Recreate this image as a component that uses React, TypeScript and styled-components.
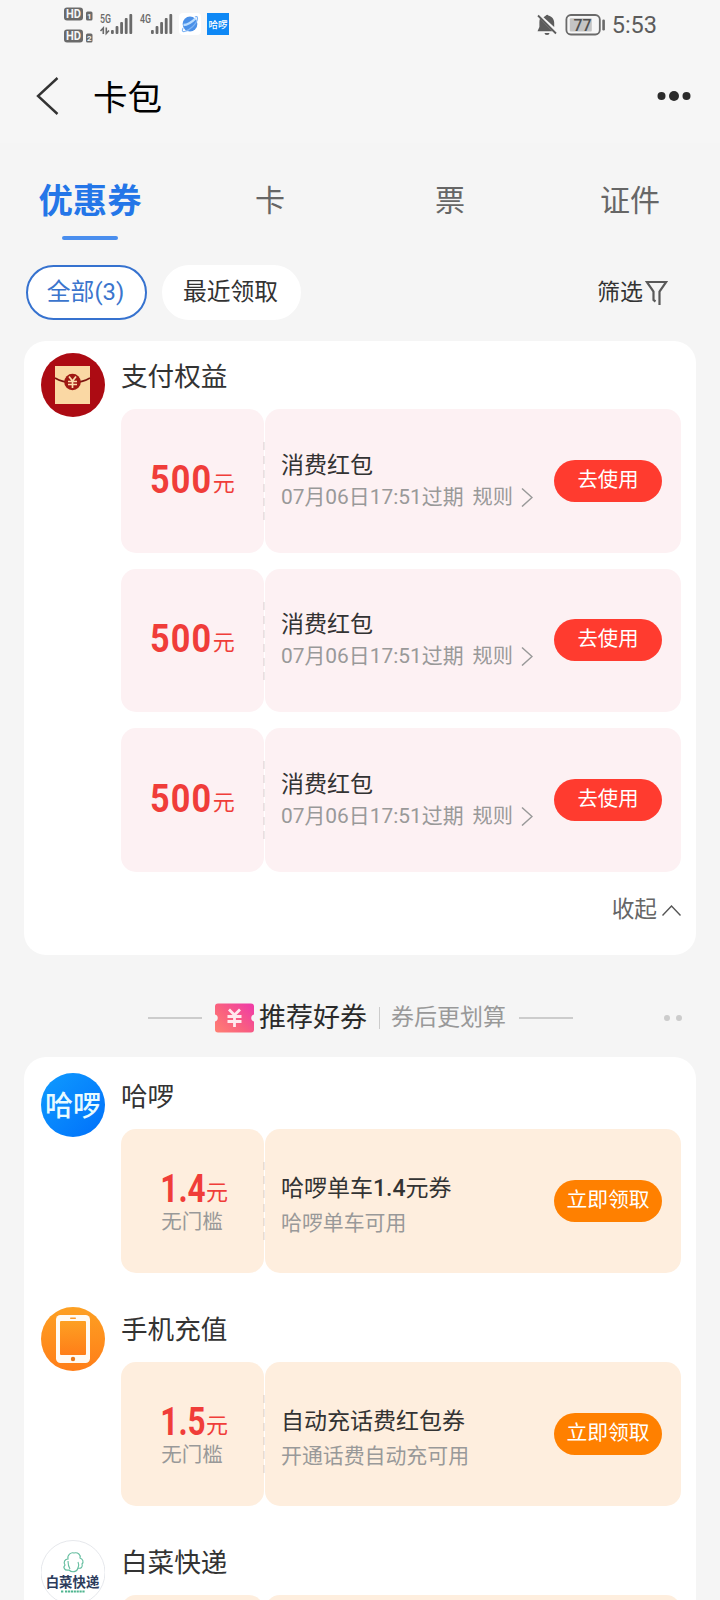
import React from "react";
import styled, { createGlobalStyle } from "styled-components";

const GlobalStyle = createGlobalStyle`
  *, *::before, *::after { box-sizing: border-box; }
  html, body { margin: 0; padding: 0; background: #f5f5f5; }
  body { font-family: Roboto, "Noto Sans CJK SC", sans-serif; font-weight: 400; color: #333; }
  button { font-family: inherit; font-weight: inherit; border: 0; padding: 0; background: none; color: inherit; }
`;

const Screen = styled.div`
  width: 720px;
  height: 1600px;
  overflow: hidden;
  display: flex;
  flex-direction: column;
  background: #f5f5f5;
`;

const StatusBar = styled.div`
  height: 48px;
  flex: none;
  display: flex;
  justify-content: space-between;
  background: #f6f6f6;
`;

const StatusRight = styled.div`
  display: flex;
  align-items: center;
  gap: 7px;
  padding-right: 63px;
  height: 49px;
`;

const Clock = styled.span`
  font-size: 23.5px;
  line-height: 28px;
  color: #5c5c5c;
`;

const NavBar = styled.header`
  height: 95px;
  flex: none;
  display: flex;
  align-items: center;
  padding: 0 29px 0 36px;
  background: #f6f6f6;
`;

const NavTitle = styled.h1`
  margin: 5px auto 0 34px;
  font-size: 34.6px;
  line-height: 44px;
  font-weight: 400;
  color: #000;
`;

const Tabs = styled.nav`
  flex: none;
  height: 104px;
  display: flex;
  padding-top: 33px;
`;

const Tab = styled.button<{ $active?: boolean }>`
  width: 180px;
  height: 64px;
  display: flex;
  flex-direction: column;
  align-items: center;
  font-size: ${(p) => (p.$active ? "34.4px" : "30px")};
  font-weight: ${(p) => (p.$active ? 700 : 400)};
  line-height: 50px;
  color: ${(p) => (p.$active ? "#2476e8" : "#666")};

  &::after {
    content: "";
    width: 56px;
    height: 4px;
    margin-top: 10px;
    border-radius: 2px;
    background: ${(p) => (p.$active ? "#4a8eee" : "transparent")};
  }
`;

const Filters = styled.div`
  flex: none;
  height: 94px;
  display: flex;
  align-items: center;
  gap: 15px;
  padding: 0 52px 3px 26px;
`;

const Chip = styled.button<{ $active?: boolean }>`
  height: 55px;
  width: ${(p) => (p.$active ? "121px" : "139px")};
  border-radius: 28px;
  background: #fff;
  border: 2px solid ${(p) => (p.$active ? "#3672cf" : "#fff")};
  color: ${(p) => (p.$active ? "#3b75cd" : "#333")};
  font-size: 23.8px;
  line-height: 48px;
  padding: 0 2px 2px 0;
`;

const FilterButton = styled.button`
  margin-left: auto;
  display: flex;
  align-items: center;
  gap: 2px;
  font-size: 23px;
  line-height: 50px;
  color: #333;
`;

const Card = styled.section<{ $h: number; $top: number }>`
  flex: none;
  height: ${(p) => p.$h}px;
  margin: 0 24px;
  padding: ${(p) => p.$top}px 15px 0 17px;
  border-radius: 22px;
  background: #fff;
`;

const Merchant = styled.div<{ $gap: number }>`
  display: flex;
  gap: 16px;
  margin-bottom: ${(p) => p.$gap}px;
`;

const Avatar = styled.svg<{ $drop?: number }>`
  width: 64px;
  height: 64px;
  flex: none;
  margin-top: ${(p) => p.$drop ?? 0}px;
`;

const MerchantBody = styled.div`
  flex: 1;
  min-width: 0;
`;

const MerchantName = styled.h2`
  margin: 0;
  font-size: 26.6px;
  font-weight: 400;
  line-height: 48px;
  height: 56px;
  color: #333;
`;

const CouponList = styled.div`
  display: flex;
  flex-direction: column;
  gap: 16px;
`;

const CouponRow = styled.div<{ $tone: Tone }>`
  position: relative;
  display: flex;
  gap: 1px;
  height: 143.5px;
  --tint: ${(p) => (p.$tone === "red" ? "#fdf1f3" : "#feeede")};
`;

const Perforation = styled.div`
  position: absolute;
  left: 142px;
  top: 33px;
  width: 2px;
  height: 78px;
  background: repeating-linear-gradient(to bottom, rgba(120, 100, 100, 0.14) 0 8px, transparent 8px 14px);
`;

const AmountBox = styled.div`
  width: 143px;
  border-radius: 15px;
  background: var(--tint);
  display: flex;
  flex-direction: column;
  align-items: center;
  justify-content: center;
`;

const Amount = styled.div<{ $alone: boolean }>`
  display: flex;
  align-items: baseline;
  color: #f03d39;
  line-height: 40px;
  padding-top: ${(p) => (p.$alone ? 7 : 5)}px;
`;

const Digits = styled.span<{ $decimal: boolean }>`
  display: inline-block;
  font-size: 38px;
  font-weight: 700;
  letter-spacing: ${(p) => (p.$decimal ? "0" : "1.3px")};
  margin-left: ${(p) => (p.$decimal ? "-6px" : "-7px")};
  margin-right: ${(p) => (p.$decimal ? "0.5px" : "0")};
  transform: scaleX(${(p) => (p.$decimal ? 0.83 : 0.9)});
  transform-origin: right center;
`;

const Unit = styled.span`
  font-size: 22px;
  margin-bottom: 3px;
  transform: translateY(-2.5px);
`;

const Condition = styled.div`
  margin-top: -9px;
  font-size: 20.5px;
  line-height: 26px;
  color: #999;
  padding: 0 1px 2px 0;
`;

const DetailBox = styled.div`
  flex: 1;
  border-radius: 15px;
  background: var(--tint);
  display: flex;
  align-items: center;
  justify-content: space-between;
  padding: 0 19px 0 16px;
`;

const CouponText = styled.div<{ $shift: number }>`
  padding-top: ${(p) => p.$shift}px;
`;

const CouponName = styled.div`
  font-size: 23px;
  line-height: 32px;
  color: #333;
  white-space: nowrap;
`;

const Figure = styled.span`
  font-weight: 500;
`;

const CouponNote = styled.div<{ $gap: number }>`
  margin-top: ${(p) => p.$gap}px;
  display: flex;
  align-items: center;
  font-size: 20.9px;
  line-height: 30px;
  color: #999;
  white-space: nowrap;
`;

const Rules = styled.span`
  display: flex;
  align-items: center;
  gap: 8px;
  margin-left: 9px;
  font-size: 20.2px;
`;

const Action = styled.button<{ $tone: Tone }>`
  width: 108px;
  height: 42px;
  border-radius: 21px;
  background: ${(p) => (p.$tone === "red" ? "#ff3b2f" : "#ff8000")};
  color: #fff;
  font-size: ${(p) => (p.$tone === "red" ? "20.3px" : "20.8px")};
  line-height: 40px;
  padding-bottom: 2px;
`;

const Collapse = styled.button`
  margin: 20px 0 0 auto;
  display: flex;
  align-items: center;
  gap: 5px;
  font-size: 22.7px;
  line-height: 35px;
  color: #666;
`;

const SectionHead = styled.div`
  flex: none;
  height: 102px;
  display: flex;
  align-items: center;
  padding: 23px 38px 0 148px;
`;

const Rule = styled.i`
  width: 54px;
  height: 2px;
  background: #ccc;
`;

const SectionTitle = styled.h2`
  margin: 0 0 0 5px;
  font-size: 27px;
  line-height: 40px;
  font-weight: 400;
  color: #2a2a2a;
`;

const Divider = styled.i`
  width: 1px;
  height: 22px;
  margin: 0 11px 0 12px;
  background: #ccc;
`;

const SectionSub = styled.span`
  font-size: 23px;
  line-height: 40px;
  margin-right: 13px;
  color: #999;
`;

const Dots = styled.div`
  margin: 1px 0 0 auto;
  display: flex;
  gap: 6px;
`;

const Dot = styled.i`
  width: 6px;
  height: 6px;
  border-radius: 3px;
  background: #ccc;
`;

type Tone = "red" | "orange";

const StatusLeft = () => (
  <svg width="240" height="48" viewBox="0 0 240 48" fontFamily="Roboto, sans-serif" fill="#6a6a6a">
    {[14, 36].map((y, i) => (
      <g key={y}>
        <rect x="64" y={y - 6.5} width="19" height="13" rx="3" />
        <text x="73.5" y={y + 4.4} fill="#f6f6f6" fontSize="12" fontWeight="700" textAnchor="middle" textLength="15" lengthAdjust="spacingAndGlyphs">HD</text>
        <rect x="86" y={y - 2.5} width="6.5" height="9" rx="1.5" />
        <text x="89.2" y={y + 4.9} fill="#f6f6f6" fontSize="8" fontWeight="700" textAnchor="middle">{i + 1}</text>
      </g>
    ))}
    <text x="100" y="22.8" fontSize="13" fontWeight="500" textLength="11" lengthAdjust="spacingAndGlyphs">5G</text>
    <path d="M103.300 34V28L100.500 31M106.300 27.500V33.500L109 30.500" stroke="#6a6a6a" strokeWidth="1.600" fill="none" />
    {[111, 151].map((x) =>
      [4, 8, 12, 16, 20].map((h, i) => (
        <rect key={`${x}-${h}`} x={x + i * 4.6} y={34 - h} width="2.8" height={h} rx="1" />
      ))
    )}
    <text x="140" y="22.8" fontSize="13" fontWeight="500" textLength="11" lengthAdjust="spacingAndGlyphs">4G</text>
    <rect x="179" y="13" width="22" height="22" rx="4" fill="#fff" />
    <circle cx="190" cy="24" r="7.4" fill="#4a90e8" />
    <path d="M183.500 25C188 25 193 21 195.500 18.500" stroke="#b9dcff" strokeWidth="2.400" fill="none" />
    <path d="M183 28c-1 2.500-1 4 1.500 3.500C189 30.500 197 24 197.500 18.500c0-2-1-2.500-2.500-1.500" stroke="#7fb4f4" strokeWidth="1.200" fill="none" />
    <rect x="207" y="13" width="22" height="22" fill="#0e88f5" />
    <text x="218" y="27.800" fill="#fff" fontFamily='"Noto Sans CJK SC", sans-serif' fontSize="9.500" fontWeight="500" textAnchor="middle">哈啰</text>
  </svg>
);

const MutedBell = () => (
  <svg width="20" height="22" viewBox="0 0 20 22">
    <path d="M3 4.500C2 7 2.600 10 2.400 13L.5 17.300H15.500zM6.500 3.300C7.500 2.500 8.500 2.200 8.800 1.500c1-1.200 2.300-1 2.500 0C15.500 2.500 17.500 6 17.200 9.500V13z" fill="#5c5c5c" />
    <path d="M1 1.500 19 19.500" stroke="#5c5c5c" strokeWidth="1.800" />
    <path d="M7.500 19h5a2.500 2 0 0 1-5 0z" fill="#5c5c5c" />
  </svg>
);

const Battery = () => (
  <svg width="41" height="22" viewBox="0 0 41 22">
    <rect x="2.400" y="1" width="33.400" height="19.500" rx="4.500" fill="none" stroke="#6a6a6a" strokeWidth="1.800" />
    <rect x="5.800" y="4.200" width="22" height="13.300" rx="1" fill="#c4c4c4" />
    <text x="18.500" y="16.800" textAnchor="middle" fontFamily="Roboto, sans-serif" fontSize="17" fontWeight="500" fill="#4f4f4f" textLength="18" lengthAdjust="spacingAndGlyphs">77</text>
    <rect x="38.300" y="5.500" width="2.600" height="11" rx="1.200" fill="#6a6a6a" />
  </svg>
);

const BackIcon = () => (
  <svg width="23" height="38" viewBox="0 0 23 38" fill="none" stroke="#333" strokeWidth="2.400">
    <path d="M21.500 1 2 19 21.500 37" />
  </svg>
);

const MoreIcon = () => (
  <svg width="34" height="12" viewBox="0 0 34 12" fill="#2b2b2b">
    <circle cx="4.500" cy="6" r="4" />
    <circle cx="17" cy="6" r="5" />
    <circle cx="29.500" cy="6" r="4" />
  </svg>
);

const FunnelIcon = () => (
  <svg width="23" height="26" viewBox="0 0 23 26" fill="none" stroke="#5a5a5a" strokeWidth="2.200">
    <path d="M10.500 21.500 8.500 20V11.500L1.800 2H21.200L14.500 11.500V25" />
  </svg>
);

const ChevronRight = () => (
  <svg width="12" height="20" viewBox="0 0 12 20" fill="none" stroke="#999" strokeWidth="1.500">
    <path d="M1 1.500 11 10.500 1 19.500" />
  </svg>
);

const ChevronUpSvg = styled.svg`
  margin-top: 2px;
`;

const ChevronUp = () => (
  <ChevronUpSvg width="19" height="11" viewBox="0 0 19 11" fill="none" stroke="#555" strokeWidth="1.400">
    <path d="M.5 10.500 9.500 1 18.500 10.500" />
  </ChevronUpSvg>
);

const TicketSvg = styled.svg`
  margin-left: 13px;
`;

const TicketIcon = () => (
  <TicketSvg width="39" height="30" viewBox="0 0 39 30">
    <defs>
      <linearGradient id="ticket" x1="0" y1="1" x2="1" y2="0.200">
        <stop offset="0" stopColor="#ff8173" />
        <stop offset="0.500" stopColor="#f9607f" />
        <stop offset="1" stopColor="#f03ea4" />
      </linearGradient>
    </defs>
    <path d="M3 .5H36a3 3 0 0 1 3 3V11.500a3.600 3.600 0 0 0 0 7V26.500a3 3 0 0 1-3 3H3a3 3 0 0 1-3-3V18.500a3.600 3.600 0 0 0 0-7V3.500a3 3 0 0 1 3-3z" fill="url(#ticket)" />
    <path d="M14 6.500 19.500 12 25 6.500M12.500 13.500H26.500M12.500 18.500H26.500M19.500 12V24" stroke="#ffe9ee" strokeWidth="2.800" fill="none" />
  </TicketSvg>
);

const RedPacketAvatar = () => (
  <Avatar viewBox="0 0 64 64">
    <circle cx="32" cy="32" r="32" fill="#ac0b13" />
    <path d="M14 13H49V51H14z" fill="#fad8a4" />
    <path d="M14 25C24 31 39 31 49 25" stroke="#7d1410" strokeWidth="1.800" fill="none" />
    <circle cx="31.500" cy="29" r="8.300" fill="#a01812" />
    <path d="M28 23.500 31.500 28 35 23.500M27 28.500H36M27 31.500H36M31.500 28V35" stroke="#fbdcab" strokeWidth="1.700" fill="none" />
  </Avatar>
);

const HelloAvatar = () => (
  <Avatar viewBox="0 0 64 64">
    <defs>
      <linearGradient id="hello" x1="0" y1="0" x2="1" y2="1">
        <stop offset="0" stopColor="#0f9bff" />
        <stop offset="1" stopColor="#0070fa" />
      </linearGradient>
    </defs>
    <circle cx="32" cy="32" r="32" fill="url(#hello)" />
    <text x="32" y="42.500" textAnchor="middle" fill="#e8fbff" fontFamily='"Noto Sans CJK SC", sans-serif' fontSize="28" fontWeight="500">哈啰</text>
  </Avatar>
);

const PhoneAvatar = () => (
  <Avatar viewBox="0 0 64 64" $drop={1}>
    <defs>
      <linearGradient id="phone" x1="0" y1="0" x2="0" y2="1">
        <stop offset="0" stopColor="#fda023" />
        <stop offset="1" stopColor="#ff7e18" />
      </linearGradient>
    </defs>
    <circle cx="32" cy="32" r="32" fill="url(#phone)" />
    <rect x="15" y="8" width="34" height="48" rx="4.500" fill="#fffaf3" />
    <rect x="19" y="14" width="26" height="34" rx="1" fill="url(#phone)" />
    <rect x="29" y="10.500" width="6" height="1.500" rx=".7" fill="#fd9a2a" />
    <circle cx="32" cy="52" r="2.200" fill="#e8791c" />
  </Avatar>
);

const CabbageAvatar = () => (
  <Avatar viewBox="0 0 64 64" $drop={1}>
    <circle cx="32" cy="32.500" r="32" fill="#fff" stroke="#e6e8ec" />
    <path d="M28 32c-5 1-6-3-4-5-2-3 0-6 3-6-1-4 3-7 6-6 4-1 7 2 6 5 3 1 4 4 2 6 1 3-1 5-4 4-1 4-6 5-9 2zM29 31c-2-3-2-5-2-8M37 30c1-2 1-4 0-6" transform="translate(0 -2)" stroke="#64bd9f" strokeWidth="1.100" fill="none" />
    <text x="31.500" y="46.800" textAnchor="middle" fill="#2d3c5c" fontFamily='"Noto Sans CJK SC", sans-serif' fontSize="13.400" fontWeight="700">白菜快递</text>
    <path d="M20 51.500H23M24 51.500H44" stroke="#4fb58f" strokeWidth="1.800" strokeDasharray="2.200 .7" />
  </Avatar>
);

interface CouponProps {
  tone: Tone;
  amount: string;
  condition?: string;
  name: string;
  note: string;
  rules?: boolean;
  action: string;
}

const Coupon = ({ tone, amount, condition, name, note, rules, action }: CouponProps) => (
  <CouponRow $tone={tone}>
    <AmountBox>
      <Amount $alone={!condition}>
        <Digits $decimal={amount.includes(".")}>{amount}</Digits>
        <Unit>元</Unit>
      </Amount>
      {condition && <Condition>{condition}</Condition>}
    </AmountBox>
    <DetailBox>
      <CouponText $shift={rules ? 0 : 9}>
        <CouponName>
          {name.split(/([\d.]+)/).map((part, i) => (i % 2 ? <Figure key={i}>{part}</Figure> : part))}
        </CouponName>
        <CouponNote $gap={rules ? 0 : 3}>
          {note}
          {rules && (
            <Rules>
              规则
              <ChevronRight />
            </Rules>
          )}
        </CouponNote>
      </CouponText>
      <Action $tone={tone}>{action}</Action>
    </DetailBox>
    <Perforation />
  </CouponRow>
);

export default function App() {
  return (
    <Screen>
      <GlobalStyle />
      <StatusBar>
        <StatusLeft />
        <StatusRight>
          <MutedBell />
          <Battery />
          <Clock>5:53</Clock>
        </StatusRight>
      </StatusBar>
      <NavBar>
        <BackIcon />
        <NavTitle>卡包</NavTitle>
        <MoreIcon />
      </NavBar>
      <Tabs>
        <Tab $active>优惠券</Tab>
        <Tab>卡</Tab>
        <Tab>票</Tab>
        <Tab>证件</Tab>
      </Tabs>
      <Filters>
        <Chip $active>全部(3)</Chip>
        <Chip>最近领取</Chip>
        <FilterButton>
          筛选
          <FunnelIcon />
        </FilterButton>
      </Filters>
      <Card $h={614} $top={12}>
        <Merchant $gap={0}>
          <RedPacketAvatar />
          <MerchantBody>
            <MerchantName>支付权益</MerchantName>
            <CouponList>
              {[1, 2, 3].map((id) => (
                <Coupon key={id} tone="red" amount="500" name="消费红包" note="07月06日17:51过期" rules action="去使用" />
              ))}
            </CouponList>
            <Collapse>
              收起
              <ChevronUp />
            </Collapse>
          </MerchantBody>
        </Merchant>
      </Card>
      <SectionHead>
        <Rule />
        <TicketIcon />
        <SectionTitle>推荐好券</SectionTitle>
        <Divider />
        <SectionSub>券后更划算</SectionSub>
        <Rule />
        <Dots>
          <Dot />
          <Dot />
        </Dots>
      </SectionHead>
      <Card $h={620} $top={16}>
        <Merchant $gap={33.5}>
          <HelloAvatar />
          <MerchantBody>
            <MerchantName>哈啰</MerchantName>
            <Coupon tone="orange" amount="1.4" condition="无门槛" name="哈啰单车1.4元券" note="哈啰单车可用" action="立即领取" />
          </MerchantBody>
        </Merchant>
        <Merchant $gap={33.5}>
          <PhoneAvatar />
          <MerchantBody>
            <MerchantName>手机充值</MerchantName>
            <Coupon tone="orange" amount="1.5" condition="无门槛" name="自动充话费红包券" note="开通话费自动充可用" action="立即领取" />
          </MerchantBody>
        </Merchant>
        <Merchant $gap={0}>
          <CabbageAvatar />
          <MerchantBody>
            <MerchantName>白菜快递</MerchantName>
            <CouponRow $tone="orange">
              <AmountBox />
              <DetailBox />
            </CouponRow>
          </MerchantBody>
        </Merchant>
      </Card>
    </Screen>
  );
}
